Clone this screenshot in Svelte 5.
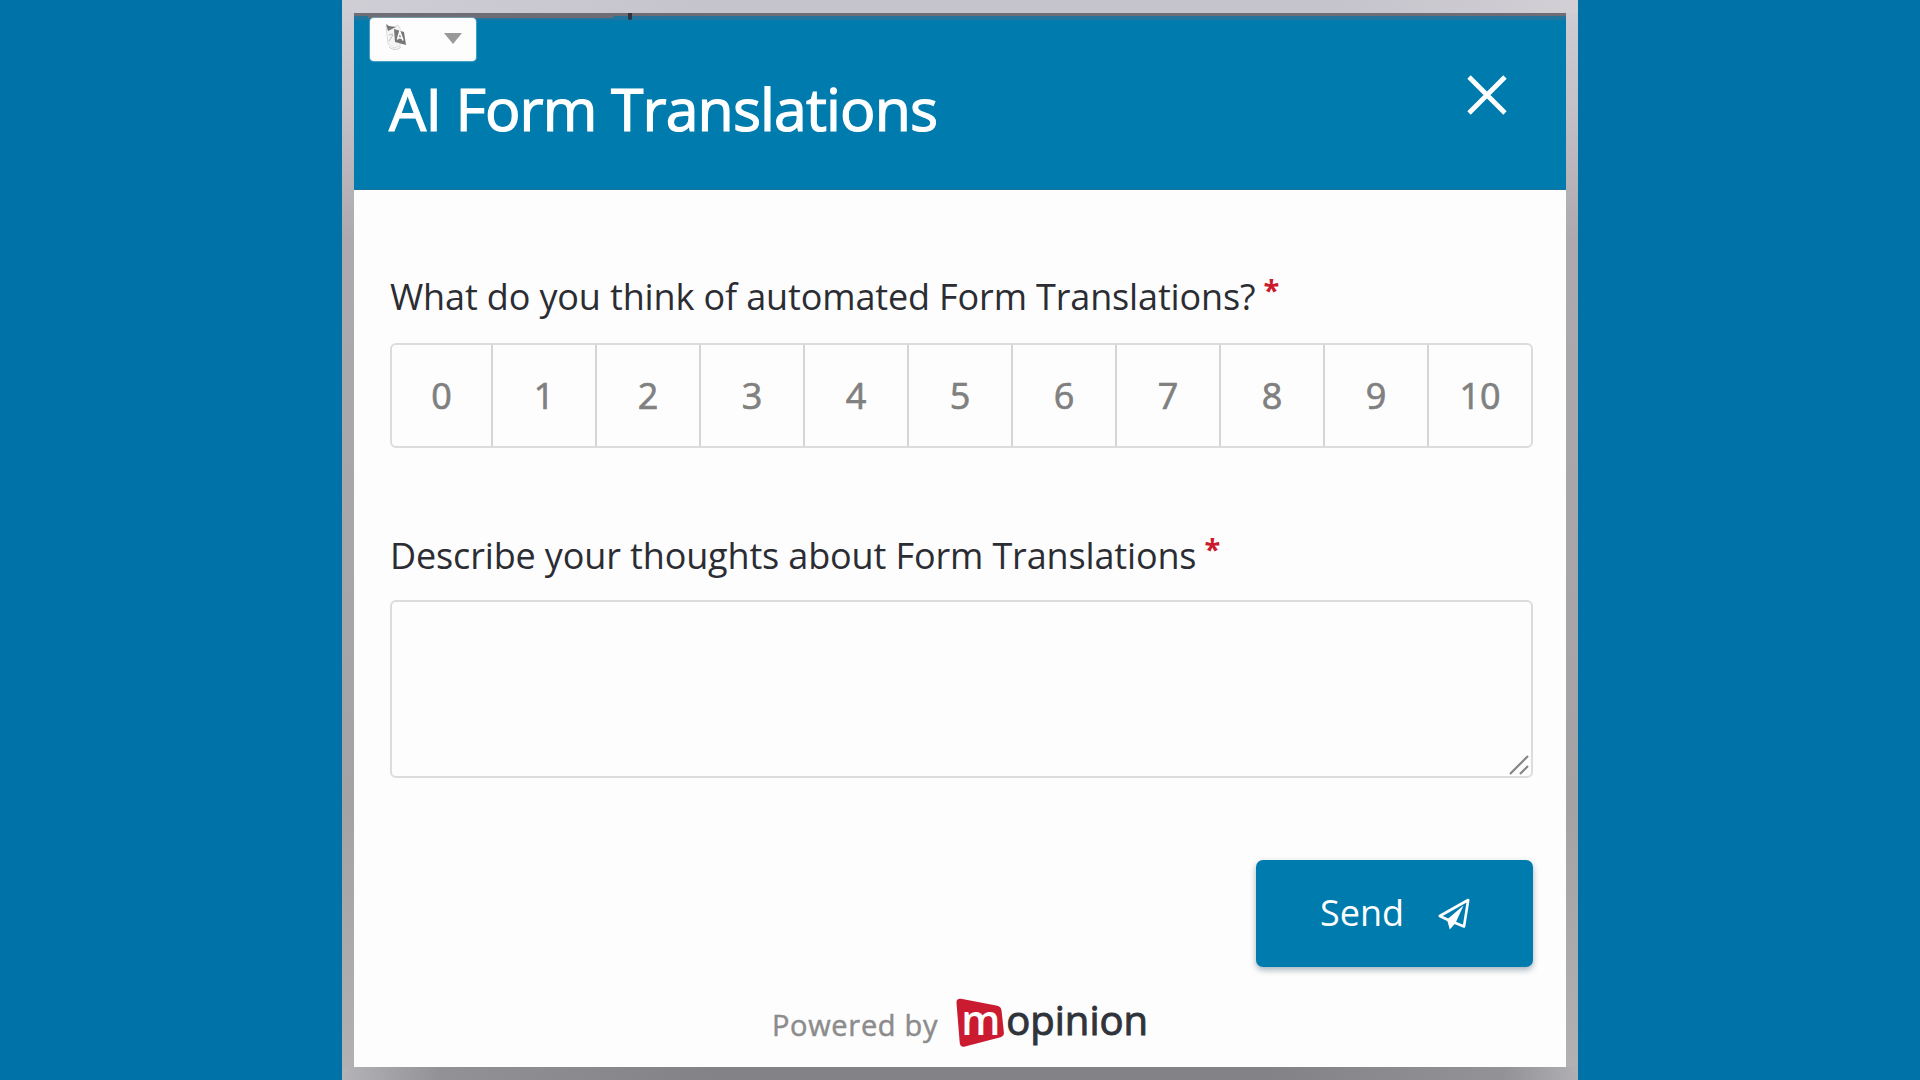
<script lang="ts">
	const scores = Array.from({ length: 11 }, (_, i) => i);

	let selected = $state<number | null>(null);
	let thoughts = $state('');
</script>

<main class="stage">
	<div class="frame">
		<form class="panel" onsubmit={(event) => event.preventDefault()}>
			<header class="header">
				<span class="header__edge"></span>
				<span class="header__tick"></span>
				<button class="language" type="button" aria-label="Language">
					<svg class="language__icon" width="22" height="28" viewBox="0 0 22 28">
						<path d="M1 3l5 2 7-3 2 3v18l-6 2-6-4z" fill="#f4f4f4" stroke="#dedede" />
						<path d="M1 1l3 2 7 1-8 4z" fill="#777" />
						<path d="M4 12l4-1M4 18l4-6" stroke="#bbb" fill="none" />
						<path d="M9 6l10 3 2 13-11-3z" fill="#777" />
						<path d="M12.5 16.5l2.3-8 3.2 9M13.5 14.5l4 1" stroke="#fff" stroke-width="1.6" fill="none" />
						<path d="M4 24q6 5 12 0" stroke="#ccc" fill="none" />
					</svg>
					<svg width="18" height="11" viewBox="0 0 18 11">
						<path d="M0 0h18l-9 11z" fill="#999" />
					</svg>
				</button>
				<h1 class="title">AI Form Translations</h1>
				<button class="close" type="button" aria-label="Close">
					<svg width="42" height="42" viewBox="0 0 42 42">
						<path d="M3 3l36 36M39 3L3 39" stroke="#fff" stroke-width="4.8" />
					</svg>
				</button>
			</header>

			<div class="body">
				<div class="question">
					What do you think of automated Form Translations?<span class="required">*</span>
				</div>
				<div class="scale">
					{#each scores as score}
						<button
							class="scale__item"
							class:scale__item--active={selected === score}
							type="button"
							onclick={() => (selected = score)}
						>
							{score}
						</button>
					{/each}
				</div>

				<label class="question question--open" for="thoughts">
					Describe your thoughts about Form Translations<span class="required">*</span>
				</label>
				<div class="field">
					<textarea id="thoughts" bind:value={thoughts}></textarea>
					<svg class="field__grip" width="20" height="20" viewBox="0 0 20 20">
						<path d="M1 19L19 1M11 19l8-8" stroke="#858585" stroke-width="2.2" />
					</svg>
				</div>

				<button class="send" type="submit">
					<span class="send__label">Send</span>
					<svg width="32" height="32" viewBox="0 0 32 32">
						<path
							d="M30.2 2L1.8 18l8.4 4L26 28.5z"
							fill="none"
							stroke="#fff"
							stroke-width="2.6"
							stroke-linejoin="round"
						/>
						<path d="M9 21.5L25.5 7.5 17.5 25l-5.7 6.5z" fill="#fff" />
					</svg>
				</button>
			</div>

			<footer class="footer">
				<span class="footer__label">Powered by</span>
				<span class="brand">
					<span class="brand__mark">
						<svg width="49" height="50" viewBox="0 0 49 50">
							<path
								d="M5 .8Q.2 .2.5 5l3.2 39.5Q4.3 49.8 9 48.6l35.5-9.4q3.8-1 3.4-4.8L45.6 13q-.4-4.4-4.2-5.2z"
								fill="#ca1b31"
							/>
						</svg>
						<span class="brand__m">m</span>
					</span>
					<span class="brand__name">opinion</span>
				</span>
			</footer>
		</form>
	</div>
</main>

<style>
	:global(body) {
		background: #0072a8;
	}

	button {
		padding: 0;
		border: 0;
		background: none;
		font: inherit;
		cursor: pointer;
	}

	svg {
		display: block;
	}

	.stage {
		display: flex;
		justify-content: center;
		height: 1080px;
		overflow: hidden;
		background: #0072a8;
		font-family: 'Open Sans', sans-serif;
	}

	.frame {
		box-sizing: border-box;
		width: 1236px;
		height: 1080px;
		padding: 13px 12px;
		background:
			linear-gradient(90deg, #b4b3b7, #929195 8%, #838287 30%, #838287 75%, #939297 94%, #b0afb3) bottom / 100% 13px no-repeat,
			linear-gradient(90deg, #d0ced5, #c5c3cb 30%, #c5c3cb 80%, #d2d0d5) top / 100% 13px no-repeat,
			linear-gradient(#d0ced5, #c3c1c8 10%, #acaaae 22%, #a3a2a5 75%, #b2b1b4);
	}

	.panel {
		display: flex;
		flex-direction: column;
		height: 1054px;
		background: #fdfdfd;
	}

	.header {
		position: relative;
		display: flex;
		justify-content: space-between;
		box-sizing: border-box;
		height: 177px;
		padding: 62px 58px 0 35px;
		border-top: 3px solid #6e6c74;
		border-bottom: 1px solid #1b719b;
		background: linear-gradient(#23759d 3px, #007bae 5px);
	}

	.header__edge {
		position: absolute;
		top: 0;
		left: 14px;
		width: 245px;
		height: 2px;
		background: #6e6c74;
	}

	.header__tick {
		position: absolute;
		top: -3px;
		left: 274px;
		width: 4px;
		height: 7px;
		border-radius: 0 0 2px 2px;
		background: #30333b;
	}

	.language {
		position: absolute;
		top: 2px;
		left: 16px;
		display: flex;
		align-items: center;
		justify-content: space-between;
		box-sizing: border-box;
		width: 106px;
		height: 43px;
		padding: 0 14px 3px 15px;
		border-radius: 4px;
		background: #fdfdfd;
		box-shadow: 0 0 1px 1px rgba(120, 190, 215, 0.6);
	}

	.language__icon {
		margin-top: -2px;
	}

	.title {
		margin: -10px 0 0;
		color: #fff;
		font-size: 59px;
		font-weight: 500;
		letter-spacing: -0.9px;
		line-height: 80px;
		white-space: nowrap;
		-webkit-text-stroke: 1.2px #fff;
	}

	.close {
		align-self: flex-start;
		margin-top: -4px;
	}

	.body {
		display: flex;
		flex-direction: column;
		padding: 83px 33px 0 36px;
	}

	.question {
		color: #2b2d33;
		font-size: 36px;
		letter-spacing: -0.14px;
		line-height: 48px;
		white-space: nowrap;
	}

	.question--open {
		margin-top: 84px;
	}

	.required {
		margin-left: 8px;
		color: #ca1b2c;
		font-size: 29px;
		font-weight: 700;
		line-height: 1;
		vertical-align: 9px;
	}

	.scale {
		display: grid;
		grid-template-columns: 101px repeat(9, 104px) 1fr;
		box-sizing: border-box;
		height: 105px;
		margin-top: 22px;
		border: 2px solid #dcdcdc;
		border-radius: 6px;
	}

	.scale__item {
		border-right: 2px solid #d5d5d5;
		color: #808080;
		font-size: 36px;
		font-weight: 500;
		-webkit-text-stroke: 0.7px #808080;
	}

	.scale__item:last-child {
		border-right: 0;
	}

	.scale__item--active {
		background: #007bae;
		color: #fff;
	}

	.field {
		position: relative;
		height: 178px;
		margin-top: 20px;
	}

	textarea {
		display: block;
		box-sizing: border-box;
		width: 100%;
		height: 100%;
		padding: 16px;
		border: 2px solid #dcdcdc;
		border-radius: 6px;
		background: transparent;
		font: 30px 'Open Sans', sans-serif;
		resize: none;
	}

	.field__grip {
		position: absolute;
		right: 4px;
		bottom: 3px;
		pointer-events: none;
	}

	.send {
		display: flex;
		align-items: center;
		align-self: flex-end;
		justify-content: space-between;
		box-sizing: border-box;
		width: 277px;
		height: 107px;
		margin-top: 82px;
		padding: 0 63px 0 64px;
		border-radius: 7px;
		background: #007bae;
		box-shadow: 0 3px 6px rgba(0, 40, 70, 0.35);
		color: #fff;
		font-size: 36px;
	}

	.send__label {
		margin-bottom: 2px;
	}

	.footer {
		display: flex;
		align-items: flex-start;
		justify-content: center;
		gap: 18px;
		margin-top: 31px;
	}

	.footer__label {
		margin-top: 7px;
		color: #8c8c8c;
		font-size: 29px;
		letter-spacing: 0.7px;
		line-height: 40px;
		-webkit-text-stroke: 0.5px #8c8c8c;
	}

	.brand {
		display: flex;
		gap: 1px;
	}

	.brand__mark {
		position: relative;
	}

	.brand__m {
		position: absolute;
		top: 1px;
		left: 5px;
		color: #fff;
		font-size: 41px;
		font-weight: 600;
		line-height: 40px;
	}

	.brand__name {
		color: #30343a;
		font-size: 40px;
		font-weight: 500;
		line-height: 44px;
		-webkit-text-stroke: 1px #30343a;
	}
</style>
